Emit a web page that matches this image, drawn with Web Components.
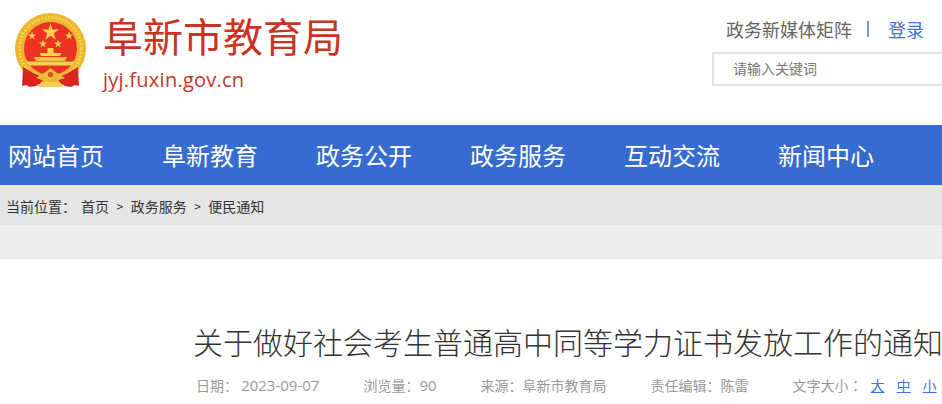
<!DOCTYPE html>
<html lang="zh">
<head>
<meta charset="utf-8">
<title>阜新市教育局</title>
<style>
  html, body { margin: 0; padding: 0; background: #fff; overflow: hidden; }
  body { font-family: "Noto Sans CJK SC", "Noto Sans", sans-serif; }
</style>
</head>
<body>
<site-header></site-header>
<site-nav>
  <a href="#">网站首页</a><a href="#">阜新教育</a><a href="#">政务公开</a><a href="#">政务服务</a><a href="#">互动交流</a><a href="#">新闻中心</a>
</site-nav>
<bread-crumb></bread-crumb>
<article-head>关于做好社会考生普通高中同等学力证书发放工作的通知</article-head>

<script>
class SiteHeader extends HTMLElement {
  constructor() {
    super();
    this.attachShadow({ mode: "open" });
    this.shadowRoot.innerHTML = `
      <style>
        :host {
          display: flex;
          justify-content: space-between;
          height: 125px;
          overflow: hidden;
          box-sizing: border-box;
        }
        .logo { display: flex; padding: 12px 0 0 14px; }
        .logo svg { width: 76px; height: 78px; flex: none; }
        .names { margin-left: 13px; }
        .name {
          margin-top: -2px;
          font-size: 40px;
          line-height: 50px;
          color: #c8341f;
          white-space: nowrap;
        }
        .url {
          margin: 7px 0 0 0;
          font: 20px/26px "Open Sans", "Noto Sans", sans-serif;
          letter-spacing: .25px;
          color: #c8341f;
        }
        .side { width: 230px; padding-top: 16px; flex: none; }
        .links {
          display: flex;
          align-items: center;
          height: 26px;
          padding-left: 14px;
          font-size: 18px;
          color: #666;
          white-space: nowrap;
        }
        .links i { width: 2px; height: 16px; margin: 0 19px 0 15px; background: #6d9bd8; }
        .links a { color: #3f74de; text-decoration: none; }
        .search {
          box-sizing: border-box;
          width: 240px;
          height: 34px;
          margin-top: 10px;
          padding-left: 19px;
          border: 2px solid #e0e0e0;
          font-size: 14px;
          line-height: 28px;
          color: #777;
        }
      </style>
      <div class="logo">
        <svg viewBox="0 0 76 78" aria-hidden="true">
          <circle cx="36.500" cy="36.500" r="35.500" fill="#edb62e"/>
          <circle cx="36.500" cy="36.500" r="31" fill="none" stroke="#f8d452" stroke-width="2.500" stroke-dasharray="2 1.500"/>
          <circle cx="36.500" cy="36.500" r="26.500" fill="#ea3323"/>
          <path d="M26 41 H47 L46 44 H27Z" fill="#f8d24a"/>
          <path d="M20 45 H53 L51 49 H22Z" fill="#f5c63c"/>
          <path d="M12.500 49.500 H60.500 L58 53.500 H15Z" fill="#f8d44e"/>
          <path d="M33.500 36 H39.500 V41 H33.500Z" fill="#f8d24a"/>
          <path d="M36.500 11 L38.500 17.400 H45 L39.800 21.300 L41.700 27.700 L36.500 23.800 L31.300 27.700 L33.200 21.300 L28 17.400 H34.500Z" fill="#f8d24a"/>
          <path d="M18 19.500 L19 22.500 H22.200 L19.600 24.400 L20.600 27.500 L18 25.600 L15.400 27.500 L16.400 24.400 L13.800 22.500 H17Z" fill="#f8d24a"/>
          <path d="M55 19.500 L56 22.500 H59.200 L56.600 24.400 L57.600 27.500 L55 25.600 L52.400 27.500 L53.400 24.400 L50.800 22.500 H54Z" fill="#f8d24a"/>
          <path d="M29 27.500 L30 30.500 H33.200 L30.600 32.400 L31.600 35.500 L29 33.600 L26.400 35.500 L27.400 32.400 L24.800 30.500 H28Z" fill="#f8d24a"/>
          <path d="M44 27.500 L45 30.500 H48.200 L45.600 32.400 L46.600 35.500 L44 33.600 L41.400 35.500 L42.400 32.400 L39.800 30.500 H43Z" fill="#f8d24a"/>
          <path d="M9 55 L8 74 L12 73 L16 75 L22 74 L26 72 L30 66 L19 61Z M64 55 L65 74 L61 73 L57 75 L51 74 L47 72 L43 66 L54 61Z" fill="#dc241c"/>
          <path d="M22 66 L30 61 L36.500 56 L43 61 L51 66 L45 68 L36.500 70 L28 68Z" fill="#edb936"/>
          <circle cx="36.500" cy="62.500" r="2.600" fill="#c95a22"/>
          <path d="M23 73 L31 70 H42 L50 73 L48 75 H25Z" fill="#f6cf54"/>
        </svg>
        <div class="names">
          <div class="name">阜新市教育局</div>
          <div class="url">jyj.fuxin.gov.cn</div>
        </div>
      </div>
      <div class="side">
        <div class="links"><span>政务新媒体矩阵</span><i></i><a href="#">登录</a></div>
        <div class="search">请输入关键词</div>
      </div>
    `;
  }
}

class SiteNav extends HTMLElement {
  constructor() {
    super();
    this.attachShadow({ mode: "open" });
    this.shadowRoot.innerHTML = `
      <style>
        :host {
          display: flex;
          gap: 58px;
          height: 60px;
          padding-left: 8px;
          align-items: center;
          background: #376bcf;
          overflow: hidden;
        }
        ::slotted(a) {
          color: #fff;
          font-size: 24px;
          line-height: 60px;
          text-decoration: none;
          white-space: nowrap;
        }
      </style>
      <slot></slot>
    `;
  }
}

class BreadCrumb extends HTMLElement {
  constructor() {
    super();
    this.attachShadow({ mode: "open" });
    this.shadowRoot.innerHTML = `
      <style>
        :host { display: block; height: 74px; background: #eeeeee; }
        .bar {
          display: flex;
          align-items: center;
          height: 42px;
          margin-bottom: -2px;
          padding-left: 6px;
          background: linear-gradient(#e5e5e5 40px, #eee 40px);
          font-size: 14px;
          line-height: 40px;
          color: #333;
          white-space: nowrap;
        }
        .here { margin-right: 5px; }
        .here b { font-weight: 400; font-family: "Noto Sans CJK TC", sans-serif; }
        span.sep { margin: 0 7.500px; font-size: 12px; }
      </style>
      <div class="bar">
        <span class="here">当前位置<b>：</b></span><span>首页</span><span class="sep">&gt;</span><span>政务服务</span><span class="sep">&gt;</span><span>便民通知</span>
      </div>
    `;
  }
}

class ArticleHead extends HTMLElement {
  constructor() {
    super();
    this.attachShadow({ mode: "open" });
    this.shadowRoot.innerHTML = `
      <style>
        :host { display: block; overflow: hidden; height: 145px; }
        h1 {
          margin: 59px 0 0 193px;
          font-size: 30px;
          font-weight: 300;
          line-height: 46px;
          color: #333;
          white-space: nowrap;
        }
        .meta {
          display: flex;
          gap: 44px;
          margin: 11px 0 0 196px;
          font-size: 14px;
          line-height: 20px;
          color: #999;
          white-space: nowrap;
        }
        .meta b { font-weight: 400; font-family: "Noto Sans CJK TC", sans-serif; }
        .num { font-family: "Open Sans", sans-serif; font-size: 15px; }
        .size { display: flex; }
        .size a { margin-left: 12px; color: #3f74de; }
        .size a:first-of-type { margin-left: 8px; }
      </style>
      <h1><slot></slot></h1>
      <div class="meta">
        <span>日期<b>：</b> <span class="num">2023-09-07</span></span>
        <span>浏览量<b>：</b><span class="num">90</span></span>
        <span>来源<b>：</b>阜新市教育局</span>
        <span>责任编辑<b>：</b>陈雷</span>
        <span class="size">文字大小<b>：</b><a href="#">大</a><a href="#">中</a><a href="#">小</a></span>
      </div>
    `;
  }
}

customElements.define("site-header", SiteHeader);
customElements.define("site-nav", SiteNav);
customElements.define("bread-crumb", BreadCrumb);
customElements.define("article-head", ArticleHead);
</script>
</body>
</html>
